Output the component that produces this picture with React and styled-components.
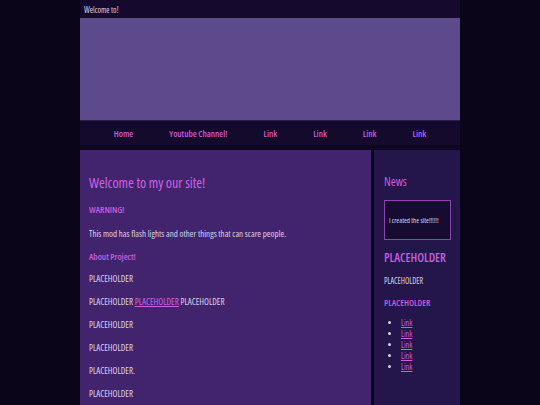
import styled, { createGlobalStyle } from "styled-components";

const Global = createGlobalStyle`
  html, body {
    margin: 0;
    padding: 0;
    background: #0b0519;
  }
  body {
    font-family: "Open Sans", "DejaVu Sans Condensed", sans-serif;
    font-stretch: condensed;
  }
`;

const Page = styled.div`
  width: 380px;
  margin: 0 auto;
  min-height: 405px;
`;

const TopBar = styled.div`
  height: 18px;
  background: #150a2e;
  color: #ddd6ea;
  font-size: 8px;
  display: flex;
  align-items: center;
  padding-left: 4px;
`;

const Banner = styled.div`
  height: 102px;
  background: #5c4a8d;
  border-bottom: 1px solid #2c1c50;
`;

const Nav = styled.nav`
  height: 24px;
  background: #130a2c;
  display: flex;
  justify-content: center;
  align-items: center;
  gap: 36px;
  border-bottom: 5px solid #0e0722;
`;

const NavLink = styled.a`
  color: #c95ddb;
  font-size: 9px;
  font-weight: 600;
  text-decoration: none;
`;

const Body = styled.div`
  display: flex;
  gap: 3px;
  align-items: stretch;
`;

const Main = styled.main`
  width: 291px;
  background: #42246e;
  padding: 24px 9px 0;
  box-sizing: border-box;
  min-height: 255px;
`;

const Title = styled.h1`
  margin: 0 0 12px;
  font-size: 14px;
  line-height: 18px;
  font-weight: 500;
  color: #d062e2;
`;

const Label = styled.h4`
  margin: 0 0 ${(p) => p.$mb ?? 13}px;
  font-size: 9px;
  line-height: 11px;
  font-weight: 600;
  color: #c95ddb;
`;

const Text = styled.p`
  margin: 0 0 12px;
  font-size: 9px;
  line-height: 11px;
  color: #d9d1e8;
`;

const Inline = styled.a`
  color: #d062e2;
  text-decoration: underline;
`;

const Side = styled.aside`
  width: 86px;
  background: #24154a;
  padding: 25px 9px 0 10px;
  box-sizing: border-box;
`;

const SideTitle = styled.h2`
  margin: 0 0 11px;
  font-size: 12px;
  line-height: 14px;
  font-weight: 500;
  color: #c95ddb;
`;

const NewsBox = styled.div`
  width: 67px;
  height: 40px;
  box-sizing: border-box;
  border: 1px solid #8e44ad;
  background: #160b30;
  color: #ddd6ea;
  font-size: 7px;
  display: flex;
  align-items: center;
  padding-left: 4px;
  margin-bottom: 11px;
  white-space: nowrap;
`;

const SideHeading = styled.h2`
  margin: 0 0 11px;
  font-size: 12px;
  line-height: 14px;
  font-weight: 600;
  color: #c95ddb;
`;

const SideText = styled.p`
  margin: 0 0 11px;
  font-size: 8px;
  line-height: 10px;
  color: #d9d1e8;
`;

const SideSub = styled.h3`
  margin: 0 0 9px;
  font-size: 9px;
  line-height: 11px;
  font-weight: 600;
  color: #c95ddb;
`;

const List = styled.ul`
  margin: 0;
  padding-left: 17px;
  color: #d9d1e8;
  font-size: 8px;
  line-height: 11px;
`;

const ListLink = styled.a`
  color: #c95ddb;
  text-decoration: underline;
`;

const navItems = ["Home", "Youtube Channel!", "Link", "Link", "Link", "Link"];

export default function App() {
  return (
    <>
      <Global />
      <Page>
        <TopBar>Welcome to!</TopBar>
        <Banner />
        <Nav>
          {navItems.map((n, i) => (
            <NavLink key={i} href="#">{n}</NavLink>
          ))}
        </Nav>
        <Body>
          <Main>
            <Title>Welcome to my our site!</Title>
            <Label>WARNING!</Label>
            <Text>This mod has flash lights and other things that can scare people.</Text>
            <Label $mb={11}>About Project!</Label>
            <Text>PLACEHOLDER</Text>
            <Text>
              PLACEHOLDER <Inline href="#">PLACEHOLDER</Inline> PLACEHOLDER
            </Text>
            <Text>PLACEHOLDER</Text>
            <Text>PLACEHOLDER</Text>
            <Text>PLACEHOLDER.</Text>
            <Text>PLACEHOLDER</Text>
          </Main>
          <Side>
            <SideTitle>News</SideTitle>
            <NewsBox>I created the site!!!!!!</NewsBox>
            <SideHeading>PLACEHOLDER</SideHeading>
            <SideText>PLACEHOLDER</SideText>
            <SideSub>PLACEHOLDER</SideSub>
            <List>
              {[0, 1, 2, 3, 4].map((i) => (
                <li key={i}>
                  <ListLink href="#">Link</ListLink>
                </li>
              ))}
            </List>
          </Side>
        </Body>
      </Page>
    </>
  );
}
